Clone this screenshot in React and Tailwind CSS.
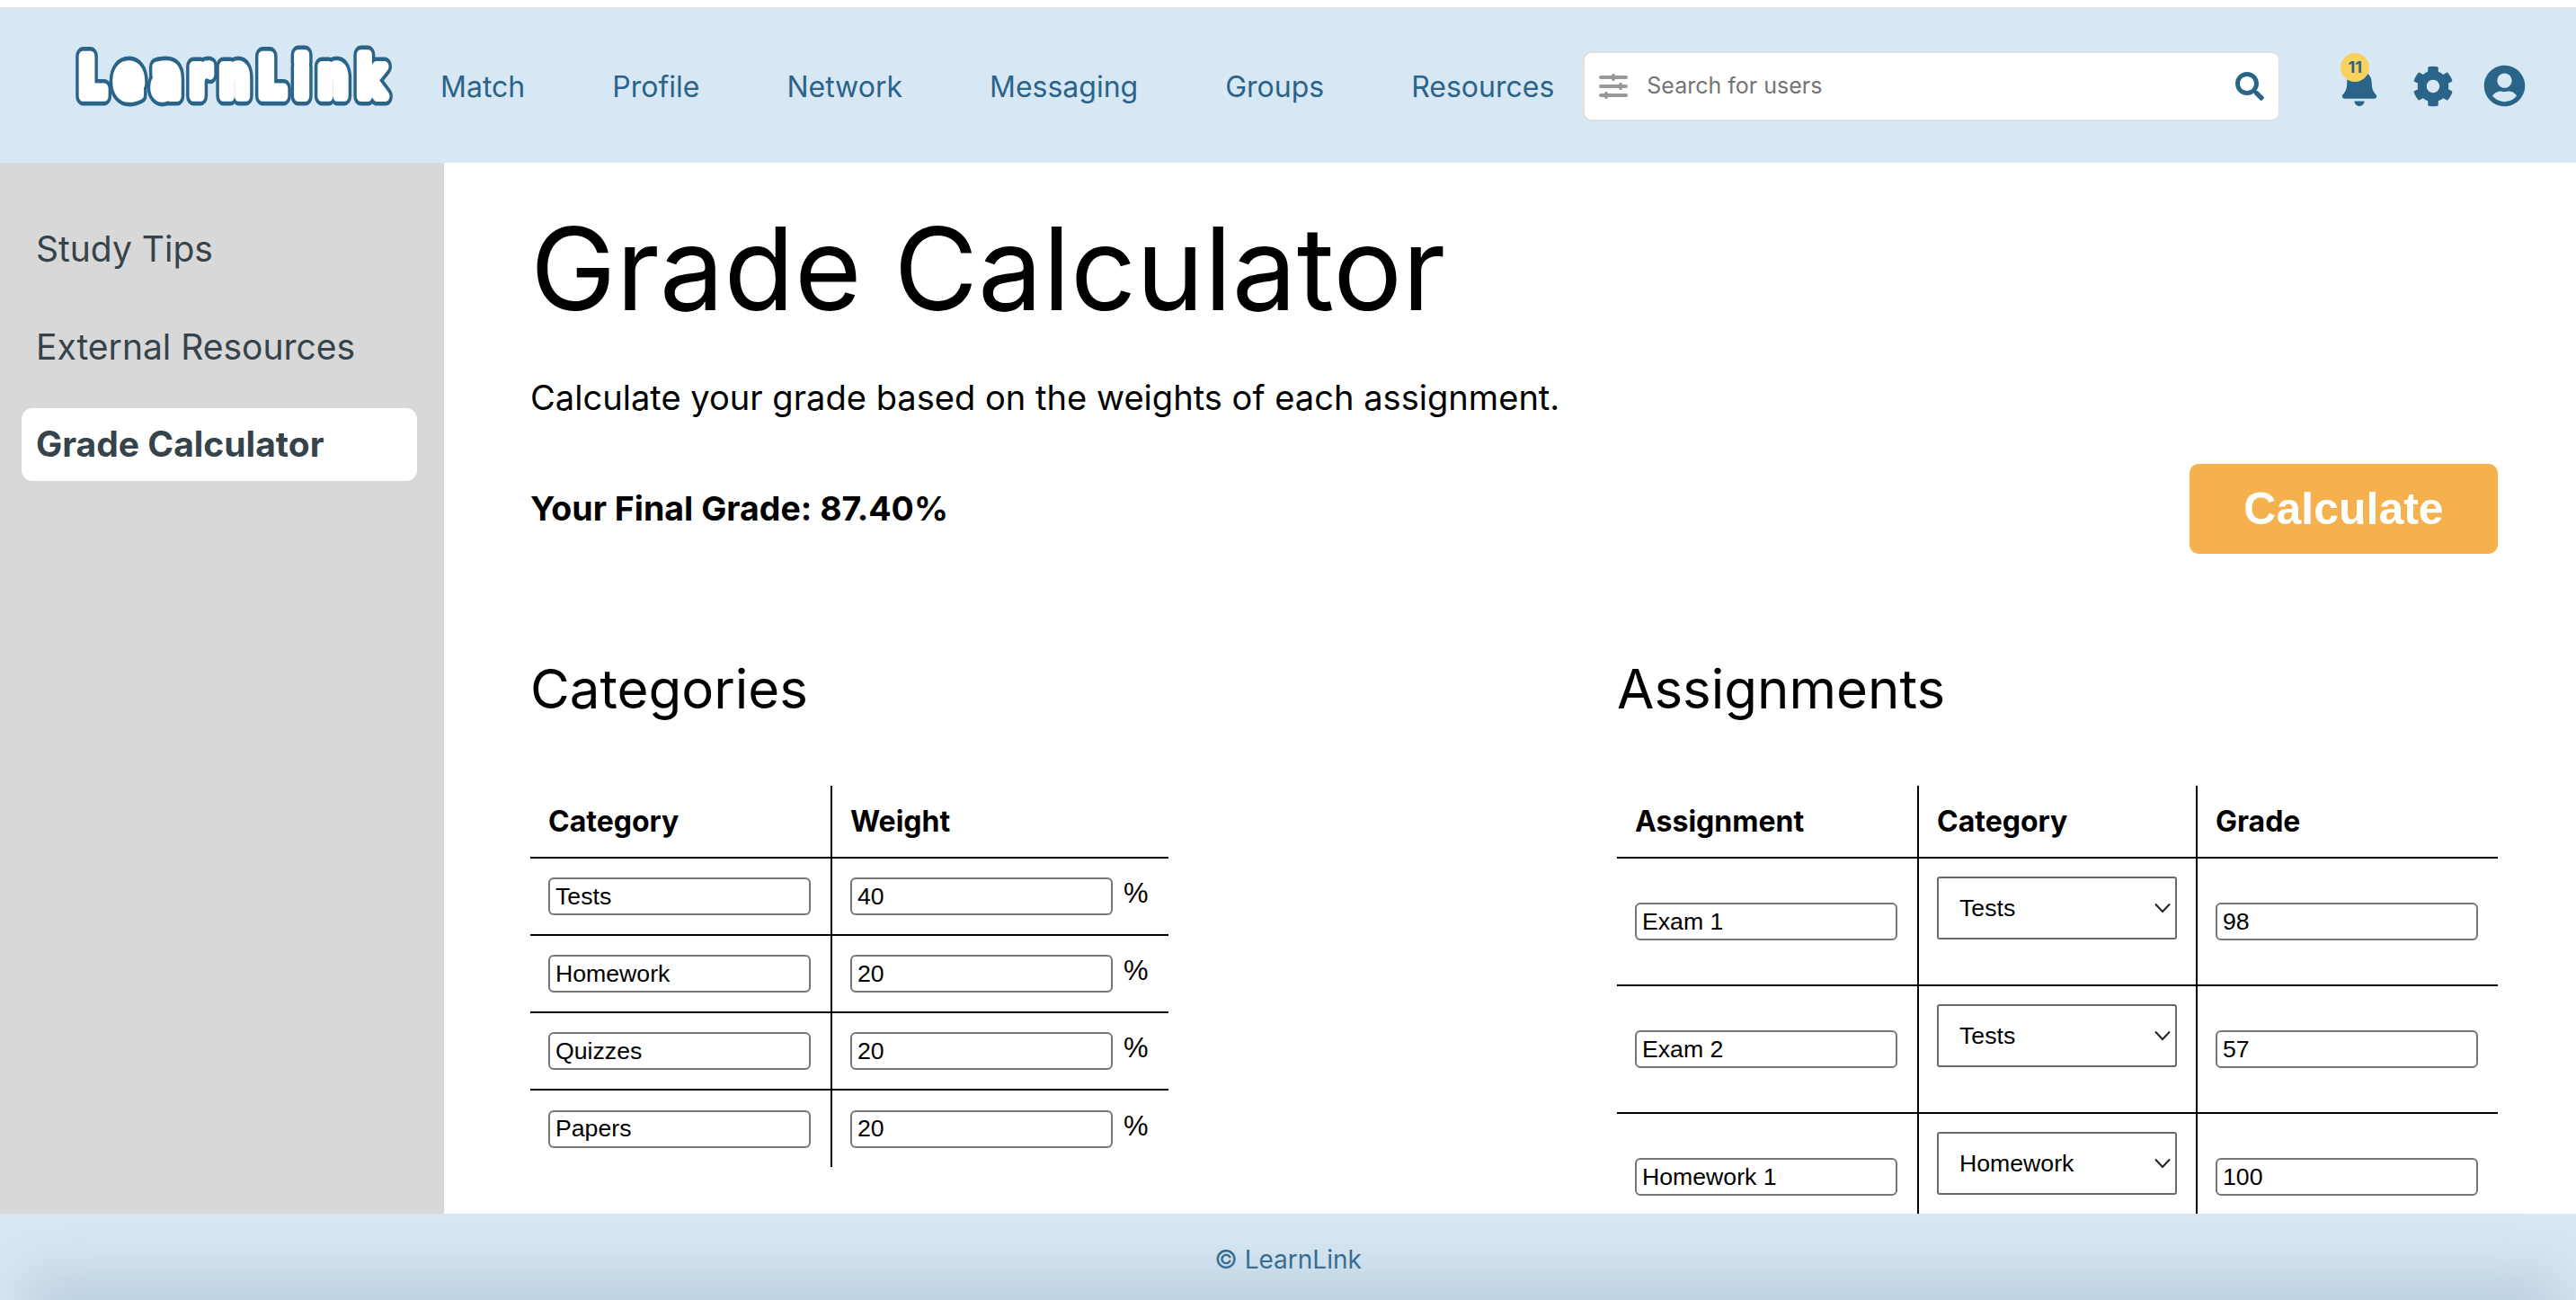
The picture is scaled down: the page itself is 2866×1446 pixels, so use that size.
import React from 'react';
import { FaBell, FaCog, FaSearch, FaUserCircle } from 'react-icons/fa';

const NAV_LINKS = ['Match', 'Profile', 'Network', 'Messaging', 'Groups', 'Resources'];
const CATEGORIES = [
  { name: 'Tests', weight: '40' },
  { name: 'Homework', weight: '20' },
  { name: 'Quizzes', weight: '20' },
  { name: 'Papers', weight: '20' },
];
const ASSIGNMENTS = [
  { name: 'Exam 1', category: 'Tests', grade: '98' },
  { name: 'Exam 2', category: 'Tests', grade: '57' },
  { name: 'Homework 1', category: 'Homework', grade: '100' },
];

const Logo = () => (
  <svg width="358" height="80" viewBox="0 0 358 80" className="shrink-0 overflow-visible">
    <g transform="scale(1 1.3)">
      <g stroke="#2b6489" strokeWidth="16" strokeLinejoin="round" fill="#2b6489">
        <text
          id="logo-text"
          x="15"
          y="39"
          textLength="340"
          lengthAdjust="spacing"
          fontFamily="'DejaVu Sans', sans-serif"
          fontWeight="700"
          fontSize="46"
        >
          LearnLink
        </text>
      </g>
      <use href="#logo-text" stroke="#ffffff" strokeWidth="9" strokeLinejoin="round" fill="#ffffff" />
    </g>
  </svg>
);

const FilterIcon = () => (
  <svg width="32" height="28" viewBox="0 0 32 28" fill="#999999">
    <rect x="0" y="2" width="32" height="4" rx="2" />
    <rect x="14" y="0" width="4" height="8" rx="2" />
    <rect x="0" y="12" width="32" height="4" rx="2" />
    <rect x="22" y="10" width="4" height="8" rx="2" />
    <rect x="0" y="22" width="32" height="4" rx="2" />
    <rect x="6" y="20" width="4" height="8" rx="2" />
  </svg>
);

const TextField = ({ value }) => (
  <input
    readOnly
    value={value}
    className="w-[292px] h-[42px] px-[6px] border-2 border-[#767676] rounded-[6px] bg-white text-[26.67px] text-black font-['Liberation_Sans',sans-serif] outline-none"
  />
);

const CategorySelect = ({ value }) => (
  <div className="relative w-[267px] h-[70px] mb-[30px]">
    <select
      value={value}
      onChange={() => {}}
      className="w-full h-full pl-[23px] appearance-none border-2 border-[#6b6b6b] rounded-[3px] bg-white text-[26.67px] text-black font-['Liberation_Sans',sans-serif] outline-none"
    >
      <option>Tests</option>
      <option>Homework</option>
      <option>Quizzes</option>
      <option>Papers</option>
    </select>
    <svg
      width="18"
      height="12"
      viewBox="0 0 18 12"
      fill="none"
      stroke="#222222"
      strokeWidth="2"
      className="absolute right-[7px] top-[29px] pointer-events-none"
    >
      <path d="M1 1.5 L9 10 L17 1.5" />
    </svg>
  </div>
);

const Header = () => (
  <header className="h-[173px] shrink-0 flex items-center bg-[#d7e8f4] border-t-2 border-[#e2e2e0] pl-[73px]">
    <Logo />
    <nav className="flex items-center gap-[97px] mt-[2px] ml-[59px] text-[32px] text-[#2b6489]">
      {NAV_LINKS.map((link) => (
        <a key={link} href="#nav">
          {link}
        </a>
      ))}
    </nav>
    <div className="flex items-center w-[776px] h-[78px] ml-[32px] pl-[16px] pr-[16px] bg-white border-2 border-[#e0e0e0] rounded-[10px]">
      <FilterIcon />
      <span className="ml-[21px] mt-[1px] text-[25px] text-[#757575]">Search for users</span>
      <FaSearch className="ml-auto text-[32px] text-[#2b6489]" />
    </div>
    <div className="flex items-center ml-[66px] text-[#2b6489]">
      <div className="relative">
        <FaBell className="text-[44px]" />
        <span className="absolute -top-[15px] left-[1px] w-[32px] h-[32px] rounded-full bg-[#f8d25f] flex items-center justify-center text-[18px] font-bold">
          11
        </span>
      </div>
      <FaCog className="ml-[37px] text-[46px]" />
      <FaUserCircle className="ml-[33px] text-[47px]" />
    </div>
  </header>
);

const Sidebar = () => (
  <aside className="w-[494px] shrink-0 bg-[#d8d8d8] pt-[55px] pl-[24px] pr-[30px] text-[39px] text-[#36434b]">
    <div className="h-[82px] mb-[27px] pl-[16px] flex items-center">Study Tips</div>
    <div className="h-[82px] mb-[27px] pl-[16px] flex items-center">External Resources</div>
    <div className="h-[81px] pl-[16px] flex items-center bg-white rounded-[12px] font-bold">
      Grade Calculator
    </div>
  </aside>
);

const CategoriesTable = () => (
  <table className="w-[710px] table-fixed border-collapse">
    <thead>
      <tr className="h-[80px]">
        <th className="w-[335px] pl-[20px] text-left text-[32px] font-bold border-r-2 border-b-2 border-black">Category</th>
        <th className="pl-[20px] text-left text-[32px] font-bold border-b-2 border-black">Weight</th>
      </tr>
    </thead>
    <tbody>
      {CATEGORIES.map((category, index) => (
        <tr key={category.name} className="h-[86px]">
          <td className={`pl-[20px] border-r-2 border-black ${index < CATEGORIES.length - 1 ? 'border-b-2' : ''}`}>
            <TextField value={category.name} />
          </td>
          <td className={`pl-[20px] border-black ${index < CATEGORIES.length - 1 ? 'border-b-2' : ''}`}>
            <div className="flex items-center">
              <TextField value={category.weight} />
              <span className="ml-[12px] -mt-[5px] text-[31px] text-black font-['Liberation_Sans',sans-serif]">%</span>
            </div>
          </td>
        </tr>
      ))}
    </tbody>
  </table>
);

const AssignmentsTable = () => (
  <table className="w-[980px] table-fixed border-collapse">
    <thead>
      <tr className="h-[80px]">
        <th className="w-[335px] pl-[20px] text-left text-[32px] font-bold border-r-2 border-b-2 border-black">Assignment</th>
        <th className="w-[310px] pl-[20px] text-left text-[32px] font-bold border-r-2 border-b-2 border-black">Category</th>
        <th className="pl-[20px] text-left text-[32px] font-bold border-b-2 border-black">Grade</th>
      </tr>
    </thead>
    <tbody>
      {ASSIGNMENTS.map((assignment) => (
        <tr key={assignment.name} className="h-[142px]">
          <td className="pl-[20px] border-r-2 border-b-2 border-black">
            <TextField value={assignment.name} />
          </td>
          <td className="pl-[20px] border-r-2 border-b-2 border-black">
            <CategorySelect value={assignment.category} />
          </td>
          <td className="pl-[20px] border-b-2 border-black">
            <TextField value={assignment.grade} />
          </td>
        </tr>
      ))}
    </tbody>
  </table>
);

const Footer = () => (
  <footer className="relative h-[96px] shrink-0 overflow-hidden bg-[#d7e8f4] pt-[5px] flex items-center justify-center text-[28px] text-[#2b6489]">
    <span className="relative">© LearnLink</span>
    <div className="absolute left-[55px] right-[45px] top-full h-[20px] shadow-[0_0_60px_30px_rgba(150,170,190,0.42)]" />
  </footer>
);

export default function App() {
  return (
    <div className="h-screen flex flex-col overflow-hidden bg-white pt-[8px] font-['Inter',sans-serif] text-black">
      <Header />
      <div className="flex flex-1 min-h-0">
        <Sidebar />
        <main className="flex-1 min-w-0 overflow-hidden pl-[96px] pr-[87px]">
          <h1 className="mt-[48px] text-[128px] leading-[140px] font-normal">Grade Calculator</h1>
          <p className="mt-[49px] text-[38.1px] leading-[48px]">Calculate your grade based on the weights of each assignment.</p>
          <div className="mt-[50px] flex items-center justify-between">
            <div className="text-[37.5px] leading-[48px] font-bold">Your Final Grade: 87.40%</div>
            <button type="button" className="w-[343px] h-[100px] rounded-[10px] bg-[#f4b14d] text-white text-[50px] font-bold font-['Liberation_Sans',sans-serif]">
              Calculate
            </button>
          </div>
          <div className="mt-[114px] flex justify-between items-start">
            <section>
              <h2 className="text-[60px] leading-[72px] font-normal mb-[72px]">Categories</h2>
              <CategoriesTable />
            </section>
            <section>
              <h2 className="text-[60px] leading-[72px] font-normal mb-[72px]">Assignments</h2>
              <AssignmentsTable />
            </section>
          </div>
        </main>
      </div>
      <Footer />
    </div>
  );
}
